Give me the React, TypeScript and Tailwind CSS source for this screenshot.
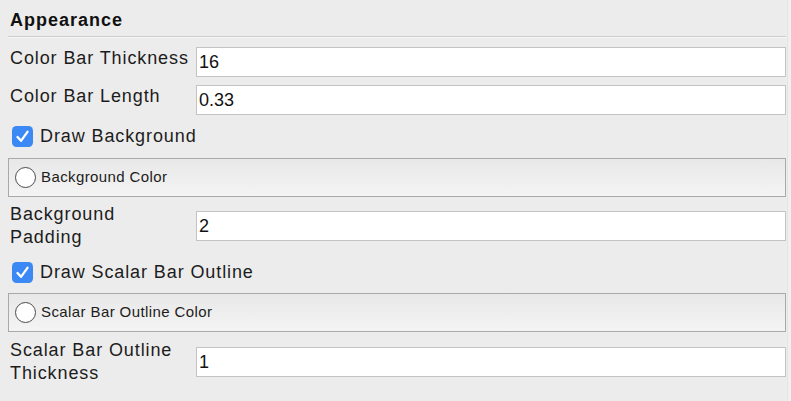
import React from "react";

const font = { fontFamily: '"Liberation Sans", Arial, sans-serif' };

function Field({ label, value }: { label: React.ReactNode; value: string }) {
  return (
    <div className="flex items-center">
      <div className="w-[188px] shrink-0 self-start pl-[2px] text-[18px] leading-[23px] tracking-[0.9px] text-[#1c1c1c]">
        {label}
      </div>
      <div className="flex h-[30px] flex-1 items-center border border-[#c3c3c3] bg-white pl-[2px] text-[18px] text-[#111]">
        {value}
      </div>
    </div>
  );
}

function Check({ label }: { label: string }) {
  return (
    <div className="flex h-[23px] items-center pl-[4px]">
      <svg width="21" height="21" viewBox="0 0 21 21">
        <rect x="0" y="0" width="21" height="21" rx="4.5" fill="#3c89f6" />
        <path d="M5.5 11 L9 14.8 L15.5 5.8" stroke="#fff" strokeWidth="2.3" fill="none" strokeLinecap="round" strokeLinejoin="round" />
      </svg>
      <span className="ml-[7px] text-[18px] tracking-[0.9px] text-[#1c1c1c]">{label}</span>
    </div>
  );
}

function ColorButton({ label }: { label: string }) {
  return (
    <div className="flex h-[39px] items-center border border-[#a9a9a9] bg-gradient-to-b from-[#e8e8e8] to-[#f4f4f4] pl-[6px]">
      <span className="h-[21px] w-[21px] rounded-full border border-[#4a4a4a] bg-white" />
      <span className="ml-[5px] text-[15px] tracking-[0.4px] text-[#1c1c1c]">{label}</span>
    </div>
  );
}

export default function App() {
  return (
    <div className="flex h-[401px] w-[791px] bg-[#ececec]" style={font}>
      <div className="flex flex-1 flex-col pl-[8px]">
        <div className="h-[36px] pl-[2px] pt-[9px] text-[18px] font-bold leading-[23px] tracking-[1px] text-[#111]">
          Appearance
        </div>
        <div className="h-px bg-[#cdcdcd]" />
        <div className="h-px bg-[#f8f8f8]" />
        <div className="mt-[9px]">
          <Field label="Color Bar Thickness" value="16" />
        </div>
        <div className="mt-[8px]">
          <Field label="Color Bar Length" value="0.33" />
        </div>
        <div className="mt-[10px]">
          <Check label="Draw Background" />
        </div>
        <div className="mt-[10px]">
          <ColorButton label="Background Color" />
        </div>
        <div className="mt-[6px]">
          <Field label={<>Background<br />Padding</>} value="2" />
        </div>
        <div className="mt-[12px]">
          <Check label="Draw Scalar Bar Outline" />
        </div>
        <div className="mt-[9px]">
          <ColorButton label="Scalar Bar Outline Color" />
        </div>
        <div className="mt-[7px]">
          <Field label={<>Scalar Bar Outline<br />Thickness</>} value="1" />
        </div>
      </div>
      <div className="ml-px w-[4px] border-l border-[#e4e4e4] bg-[#f0f0f0]" />
    </div>
  );
}
